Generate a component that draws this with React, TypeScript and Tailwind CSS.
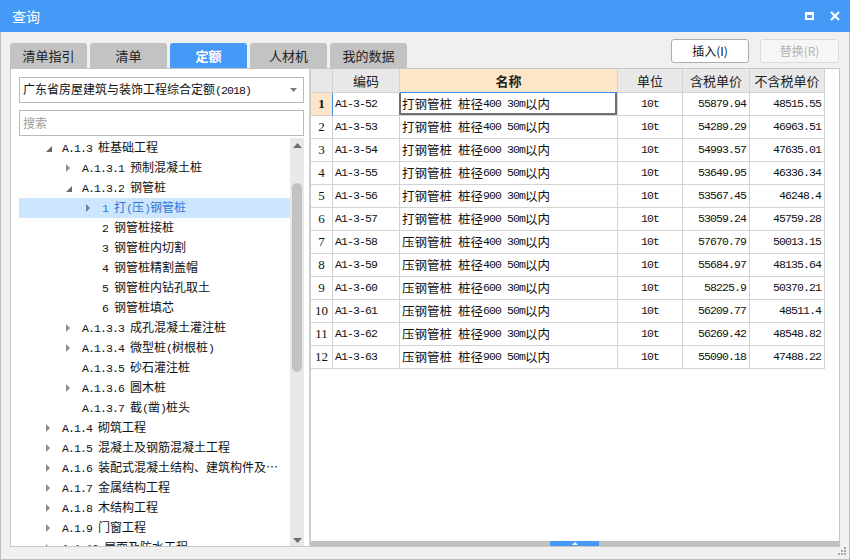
import React from "react";

type TreeNode = {
  level: 1 | 2 | 3;
  label: string;
  icon: "open" | "closed" | "none";
  selected?: boolean;
};

type Row = {
  code: string;
  name: string;
  unit: string;
  tax: string;
  noTax: string;
};

const TABS = ["清单指引", "清单", "定额", "人材机", "我的数据"];
const ACTIVE_TAB = "定额";

const TREE: TreeNode[] = [
  { level: 1, label: "A.1.3 桩基础工程", icon: "open" },
  { level: 2, label: "A.1.3.1 预制混凝土桩", icon: "closed" },
  { level: 2, label: "A.1.3.2 钢管桩", icon: "open" },
  { level: 3, label: "1 打(压)钢管桩", icon: "closed", selected: true },
  { level: 3, label: "2 钢管桩接桩", icon: "none" },
  { level: 3, label: "3 钢管桩内切割", icon: "none" },
  { level: 3, label: "4 钢管桩精割盖帽", icon: "none" },
  { level: 3, label: "5 钢管桩内钻孔取土", icon: "none" },
  { level: 3, label: "6 钢管桩填芯", icon: "none" },
  { level: 2, label: "A.1.3.3 成孔混凝土灌注桩", icon: "closed" },
  { level: 2, label: "A.1.3.4 微型桩(树根桩)", icon: "closed" },
  { level: 2, label: "A.1.3.5 砂石灌注桩", icon: "none" },
  { level: 2, label: "A.1.3.6 圆木桩", icon: "closed" },
  { level: 2, label: "A.1.3.7 截(凿)桩头", icon: "none" },
  { level: 1, label: "A.1.4 砌筑工程", icon: "closed" },
  { level: 1, label: "A.1.5 混凝土及钢筋混凝土工程", icon: "closed" },
  { level: 1, label: "A.1.6 装配式混凝土结构、建筑构件及…", icon: "closed" },
  { level: 1, label: "A.1.7 金属结构工程", icon: "closed" },
  { level: 1, label: "A.1.8 木结构工程", icon: "closed" },
  { level: 1, label: "A.1.9 门窗工程", icon: "closed" },
  { level: 1, label: "A.1.10 屋面及防水工程", icon: "closed" },
];

const ROWS: Row[] = [
  { code: "A1-3-52", name: "打钢管桩 桩径400 30m以内", unit: "10t", tax: "55879.94", noTax: "48515.55" },
  { code: "A1-3-53", name: "打钢管桩 桩径400 50m以内", unit: "10t", tax: "54289.29", noTax: "46963.51" },
  { code: "A1-3-54", name: "打钢管桩 桩径600 30m以内", unit: "10t", tax: "54993.57", noTax: "47635.01" },
  { code: "A1-3-55", name: "打钢管桩 桩径600 50m以内", unit: "10t", tax: "53649.95", noTax: "46336.34" },
  { code: "A1-3-56", name: "打钢管桩 桩径900 30m以内", unit: "10t", tax: "53567.45", noTax: "46248.4" },
  { code: "A1-3-57", name: "打钢管桩 桩径900 50m以内", unit: "10t", tax: "53059.24", noTax: "45759.28" },
  { code: "A1-3-58", name: "压钢管桩 桩径400 30m以内", unit: "10t", tax: "57670.79", noTax: "50013.15" },
  { code: "A1-3-59", name: "压钢管桩 桩径400 50m以内", unit: "10t", tax: "55684.97", noTax: "48135.64" },
  { code: "A1-3-60", name: "压钢管桩 桩径600 30m以内", unit: "10t", tax: "58225.9", noTax: "50370.21" },
  { code: "A1-3-61", name: "压钢管桩 桩径600 50m以内", unit: "10t", tax: "56209.77", noTax: "48511.4" },
  { code: "A1-3-62", name: "压钢管桩 桩径900 30m以内", unit: "10t", tax: "56269.42", noTax: "48548.82" },
  { code: "A1-3-63", name: "压钢管桩 桩径900 50m以内", unit: "10t", tax: "55090.18", noTax: "47488.22" },
];

const INDENT: Record<number, string> = {
  1: "pl-[27px]",
  2: "pl-[47px]",
  3: "pl-[67px]",
};

function cx(...c: (string | false | null | undefined)[]) {
  return c.filter(Boolean).join(" ");
}

// latin runs in a narrow mono face (half-width like 宋体), CJK in Noto
function Mix({ text }: { text: string }) {
  const parts = text.match(/[\x00-\x7f]+|[^\x00-\x7f]+/g) ?? [];
  return (
    <>
      {parts.map((p, i) =>
        /^[\x00-\x7f]/.test(p) ? (
          <span
            key={i}
            className="whitespace-pre font-['Liberation_Mono',monospace] text-[11.5px] tracking-[-0.9px]"
          >
            {p}
          </span>
        ) : (
          <span key={i}>{p}</span>
        )
      )}
    </>
  );
}

function TreeArrow({ kind, selected }: { kind: TreeNode["icon"]; selected?: boolean }) {
  if (kind === "open") {
    return (
      <svg width="7" height="7" viewBox="0 0 7 7" className="mt-[2px]">
        <polygon points="6,0 6,6 0,6" fill="#6b6b6b" />
      </svg>
    );
  }
  if (kind === "closed") {
    return (
      <svg width="5" height="8" viewBox="0 0 5 8">
        <polygon points="0,0 4,4 0,8" fill={selected ? "#6f7d8c" : "#8f8f8f"} />
      </svg>
    );
  }
  return null;
}

function TitleBar() {
  return (
    <div className="flex h-[32px] shrink-0 items-center justify-between bg-[#4599f7] pl-[12px] pr-[10px]">
      <div className="text-[14px] text-white">查询</div>
      <div className="flex items-center gap-[16px]">
        {/* maximize */}
        <div className="h-[8px] w-[9px] border-2 border-t-[3px] border-white" />
        {/* close */}
        <svg width="10" height="10" viewBox="0 0 10 10">
          <path d="M1 1L9 9M9 1L1 9" stroke="white" strokeWidth="2.2" />
        </svg>
      </div>
    </div>
  );
}

function LeftPanel() {
  return (
    <div className="flex w-[298px] shrink-0 flex-col bg-white">
      {/* 定额库 */}
      <div className="ml-[8px] mt-[8px] flex h-[26px] w-[285px] items-center justify-between border border-[#b9b9b9] pl-[3px] pr-[6px] text-[12px] text-[#111]">
        <div>
          <Mix text="广东省房屋建筑与装饰工程综合定额(2018)" />
        </div>
        <svg width="7" height="4" viewBox="0 0 7 4">
          <polygon points="0,0 7,0 3.5,4" fill="#7a7a7a" />
        </svg>
      </div>

      {/* 搜索 */}
      <div className="ml-[8px] mt-[7px] flex h-[26px] w-[285px] items-center border border-[#b9b9b9] pl-[3px] text-[12px] text-[#9c9c9c]">
        搜索
      </div>

      {/* tree */}
      <div className="mt-[2px] flex min-h-0 flex-1">
        <div className="ml-[8px] w-[271px] overflow-hidden">
          {TREE.map((n, i) => (
            <div
              key={i}
              className={cx(
                "flex h-[20px] items-center whitespace-nowrap text-[12px]",
                INDENT[n.level],
                n.selected ? "bg-[#cce7fd] text-[#2a78e0]" : "text-[#111]"
              )}
            >
              <div className="flex w-[16px] shrink-0 items-center">
                <TreeArrow kind={n.icon} selected={n.selected} />
              </div>
              <div>
                <Mix text={n.label} />
              </div>
            </div>
          ))}
        </div>

        {/* vertical scrollbar */}
        <div className="flex w-[14px] flex-col items-center bg-[#e8e8e8]">
          <svg width="9" height="5" viewBox="0 0 9 5" className="mt-[5px]">
            <polygon points="0,5 9,5 4.5,0" fill="#6e6e6e" />
          </svg>
          <div className="mt-[35px] h-[189px] w-[10px] rounded-full bg-[#c2c2c2]" />
          <div className="flex-1" />
          <svg width="9" height="5" viewBox="0 0 9 5" className="mb-[3px]">
            <polygon points="0,0 9,0 4.5,5" fill="#6e6e6e" />
          </svg>
        </div>
      </div>
    </div>
  );
}

const COLS = "grid grid-cols-[22px_67px_218px_65px_67px_75px]";
const CELL = "flex items-center border-b border-r border-[#d3d3d3]";

function ResultTable() {
  return (
    <div className="w-[514px]">
      {/* header */}
      <div className={cx(COLS, "h-[24px] text-[13px] text-[#222]")}>
        <div className={cx(CELL, "bg-[#e8e8e8]")} />
        <div className={cx(CELL, "justify-center bg-[#e8e8e8]")}>编码</div>
        <div className="flex items-center justify-center border-b border-r border-b-[#3f8ef0] border-r-[#d3d3d3] bg-[#fde6c8] font-bold">
          名称
        </div>
        <div className={cx(CELL, "justify-center bg-[#e8e8e8]")}>单位</div>
        <div className={cx(CELL, "justify-center bg-[#e8e8e8]")}>含税单价</div>
        <div className={cx(CELL, "justify-center bg-[#e8e8e8]")}>不含税单价</div>
      </div>

      {ROWS.map((r, i) => {
        const first = i === 0;
        return (
          <div key={r.code} className={cx(COLS, "h-[23px] text-[#111]")}>
            <div
              className={cx(
                "flex items-center justify-center border-b border-r border-[#d3d3d3] font-['Liberation_Serif',serif] text-[13px]",
                first && "border-r-[#3f8ef0] bg-[#fde6c8] font-bold"
              )}
            >
              {i + 1}
            </div>
            <div className={cx(CELL, "pl-[2px]")}>
              <Mix text={r.code} />
            </div>
            <div className={cx(CELL, "relative pl-[2px] text-[12.5px]")}>
              <Mix text={r.name} />
              {first && (
                <div className="absolute inset-y-0 -left-px right-0 border-2 border-t-0 border-[#6f6f6f]" />
              )}
            </div>
            <div className={cx(CELL, "justify-center")}>
              <Mix text={r.unit} />
            </div>
            <div className={cx(CELL, "justify-end pr-[3px]")}>
              <Mix text={r.tax} />
            </div>
            <div className={cx(CELL, "justify-end pr-[3px]")}>
              <Mix text={r.noTax} />
            </div>
          </div>
        );
      })}
    </div>
  );
}

function RightPanel() {
  return (
    <div className="flex min-w-0 flex-1 flex-col bg-white">
      <div className="flex-1 overflow-hidden">
        <ResultTable />
      </div>
      {/* splitter bar with handle */}
      <div className="flex h-[5px] shrink-0 bg-[#c1c1c1]">
        <div className="ml-[239px] flex w-[49px] items-center justify-center bg-[#4599f7]">
          <svg width="6" height="3" viewBox="0 0 6 3">
            <polygon points="0,3 6,3 3,0" fill="white" />
          </svg>
        </div>
      </div>
    </div>
  );
}

export default function App() {
  return (
    <div className="relative flex h-[560px] w-[850px] flex-col overflow-hidden bg-[#f0f0f0] font-['Noto_Sans_CJK_SC',sans-serif]">
      <TitleBar />

      <div className="flex flex-1 flex-col border-x border-b border-[#bdbdbd] px-[9px]">
        {/* tabs + actions */}
        <div className="flex h-[36px] shrink-0 items-end justify-between pt-[7px]">
          <div className="flex items-end gap-[3px]">
            {TABS.map((t) => (
              <div
                key={t}
                className={cx(
                  "flex h-[25px] w-[77px] items-center justify-center rounded-t-[3px] text-[13px]",
                  t === ACTIVE_TAB ? "bg-[#4599f7] font-bold text-white" : "bg-[#c3c3c3] text-[#222]"
                )}
              >
                {t}
              </div>
            ))}
          </div>

          <div className="mb-[5px] mr-[1px] flex gap-[11px] self-start">
            <button className="flex h-[24px] w-[78px] items-center justify-center rounded-[3px] border border-[#adadad] bg-white text-[12px] text-[#111]">
              插入(I)
            </button>
            <button className="flex h-[24px] w-[79px] items-center justify-center rounded-[3px] border border-[#dadada] bg-[#f6f6f6] text-[12px] text-[#b3b3b3]">
              替换(R)
            </button>
          </div>
        </div>

        {/* content */}
        <div className="flex h-[479px] shrink-0 border border-[#c7c7c7] bg-white">
          <LeftPanel />
          <div className="w-[2px] shrink-0 bg-[#cdcdcd]" />
          <RightPanel />
        </div>
      </div>

      {/* resize grip */}
      <svg width="9" height="9" viewBox="0 0 9 9" className="absolute bottom-[4px] right-[3px]">
        <rect x="6" y="0" width="2" height="2" fill="#a9a9a9" />
        <rect x="3" y="3" width="2" height="2" fill="#a9a9a9" />
        <rect x="6" y="3" width="2" height="2" fill="#a9a9a9" />
        <rect x="0" y="6" width="2" height="2" fill="#a9a9a9" />
        <rect x="3" y="6" width="2" height="2" fill="#a9a9a9" />
        <rect x="6" y="6" width="2" height="2" fill="#a9a9a9" />
      </svg>
    </div>
  );
}
